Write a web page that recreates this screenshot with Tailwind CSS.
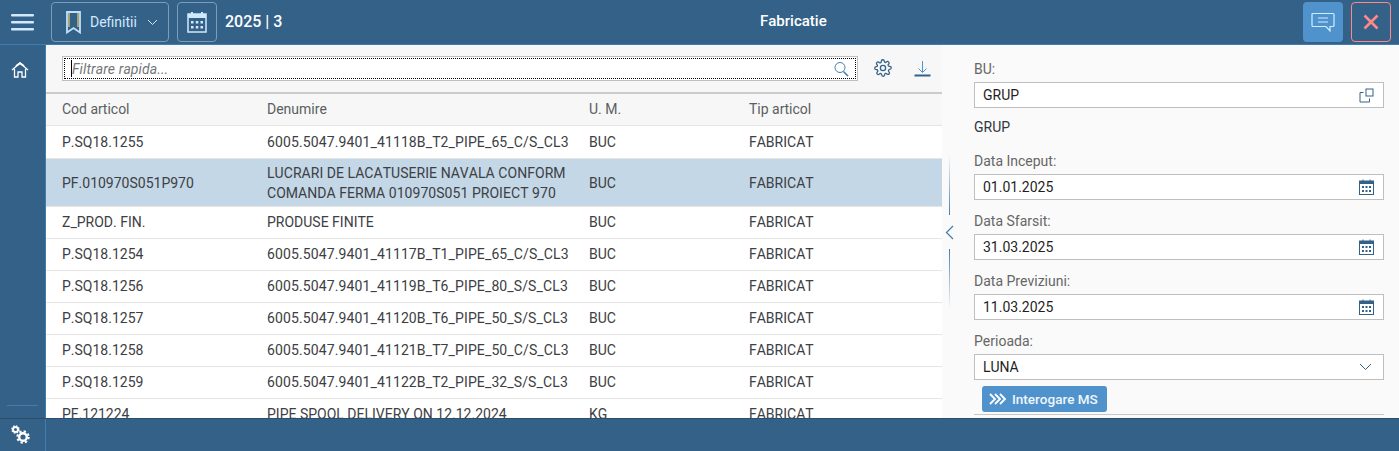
<!DOCTYPE html>
<html><head><meta charset="utf-8">
<script src="https://cdn.jsdelivr.net/npm/@tailwindcss/browser@4"></script>
</head>
<body class="m-0">
<div class="w-[1399px] h-[451px] overflow-hidden flex flex-col bg-white font-['Roboto',sans-serif] [font-kerning:none] text-[14px] text-[#3c4044]">
  <!-- header -->
  <header class="relative h-[45px] shrink-0 bg-[#346187] border-b border-[#427cac] flex items-center text-white">
    <button class="w-[45px] h-[44px] flex items-center justify-center">
      <svg width="23" height="18" viewBox="0 0 23 18"><g fill="#d1e8ff"><rect x="0" y="1" width="23" height="2.500" rx="1"/><rect x="0" y="8" width="23" height="2.500" rx="1"/><rect x="0" y="15" width="23" height="2.500" rx="1"/></g></svg>
    </button>
    <button class="ml-[6px] w-[118px] h-[40px] rounded-[4px] border border-[#7c9cb8] flex items-center pl-[14px]">
      <svg width="15" height="23" viewBox="0 0 15 23" fill="none"><path d="M1 1h13v20.500l-6.500-4.500-6.500 4.500z" fill="#346187" stroke="#bfe0fb" stroke-width="1.800"/><path d="M3 2v14M12 2v14" stroke="#f0d060" stroke-width="1.200"/></svg>
      <span class="ml-[9px] text-[14px] text-[#d1e8ff]">Definitii</span>
      <svg class="ml-[10px]" width="11" height="7" viewBox="0 0 11 7" fill="none"><path d="M1 1l4.500 4.500L10 1" stroke="#d1e8ff"/></svg>
    </button>
    <button class="ml-[8px] w-[40px] h-[40px] rounded-[4px] border border-[#7c9cb8] flex items-center justify-center">
      <svg width="20" height="22" viewBox="0 0 20 22" fill="none"><rect x="1" y="3" width="18" height="18" stroke="#d1e8ff" stroke-width="1.500"/><rect x="1" y="3" width="18" height="4" fill="#d1e8ff"/><path d="M5 1v3M15 1v3" stroke="#d1e8ff" stroke-width="2"/><g fill="#d1e8ff"><rect x="4" y="10" width="2.500" height="2.500"/><rect x="8.800" y="10" width="2.500" height="2.500"/><rect x="13.500" y="10" width="2.500" height="2.500"/><rect x="4" y="15" width="2.500" height="2.500"/><rect x="8.800" y="15" width="2.500" height="2.500"/><rect x="13.500" y="15" width="2.500" height="2.500"/></g></svg>
    </button>
    <span class="ml-[8px] text-[16px] font-medium">2025 | 3</span>
    <span class="absolute left-[760px] top-[11px] text-[15px] font-medium leading-[20px]">Fabricatie</span>
    <div class="ml-auto flex gap-[8px] pr-[8px]">
      <button class="w-[40px] h-[40px] rounded-[4px] bg-[#5093cc] flex items-center justify-center">
        <svg width="24" height="21" viewBox="0 0 24 21" fill="none"><path d="M2 1.500h20a1 1 0 0 1 1 1v11a1 1 0 0 1-1 1h-3v4.500l-4-4.500H2a1 1 0 0 1-1-1v-11a1 1 0 0 1 1-1z" stroke="#cdeeff" stroke-width="1.200"/><path d="M7 6h10M7 10h10" stroke="#d1e8ff"/></svg>
      </button>
      <button class="w-[40px] h-[40px] rounded-[4px] border border-[#ff8888] flex items-center justify-center">
        <svg width="16" height="16" viewBox="0 0 16 16" fill="none"><path d="M1.500 1.500l13 13M14.500 1.500l-13 13" stroke="#ff8888" stroke-width="2.600"/></svg>
      </button>
    </div>
  </header>

  <div class="flex-1 min-h-0 flex">
    <!-- sidebar -->
    <aside class="w-[46px] shrink-0 bg-[#346187] border-r border-[#427cac] flex flex-col items-center">
      <svg class="mt-[17px] ml-[-6px]" width="18" height="16" viewBox="0 0 18 16" fill="none" stroke="#ffffff" stroke-width="1.300"><path d="M1 8l8-7 8 7"/><path d="M3.500 7v8h3.500v-5h4v5h3.500V7"/><path d="M5 4l4-2.800L13 4" stroke-width="1.800"/></svg>
      <div class="mt-auto w-[31px] h-px bg-[#427cac] mb-[12px] ml-[-1px]"></div>
    </aside>

    <!-- table area -->
    <main class="w-[896px] shrink-0 flex flex-col overflow-hidden">
      <div class="h-[49px] shrink-0 bg-[#f7f7f7] border-b-2 border-[#cccccc] flex items-center pl-[16px]">
        <div class="w-[796px] h-[25px] bg-white border border-[#bfbfbf] flex items-center relative">
          <div class="absolute inset-[1px] border border-dotted border-black"></div>
          <div class="w-px h-[17px] bg-black ml-[8px]"></div>
          <span class="italic text-[#74777a] text-[14px] leading-[20px] tracking-[0.1px]">Filtrare rapida...</span>
          <svg class="absolute right-[8px] top-[4px]" width="15" height="16" viewBox="0 0 15 16" fill="none" stroke="#427cac"><circle cx="6" cy="6.500" r="5"/><path d="M9.500 10.500l4.500 4.500" stroke-width="1.500"/></svg>
        </div>
        <svg class="ml-[16px] mt-[-1px]" width="18" height="18" viewBox="0 0 24 24" fill="none" stroke="#346187" stroke-width="1.700"><circle cx="12" cy="12" r="3.500"/><path d="M19.400 15a1.600 1.600 0 0 0 .3 1.800l.1.100a2 2 0 1 1-2.800 2.800l-.1-.1a1.600 1.600 0 0 0-2.700 1.100V21a2 2 0 1 1-4 0v-.1a1.600 1.600 0 0 0-2.700-1.100l-.1.100a2 2 0 1 1-2.800-2.800l.1-.1a1.600 1.600 0 0 0-1.100-2.700H3a2 2 0 1 1 0-4h.1a1.600 1.600 0 0 0 1.100-2.700l-.1-.1a2 2 0 1 1 2.800-2.800l.1.100a1.600 1.600 0 0 0 2.700-1.100V3a2 2 0 1 1 4 0v.1a1.600 1.600 0 0 0 2.700 1.100l.1-.1a2 2 0 1 1 2.800 2.800l-.1.100a1.600 1.600 0 0 0 1.100 2.700H21a2 2 0 1 1 0 4h-.1a1.600 1.600 0 0 0-1.500 1.300z"/></svg>
        <svg class="ml-[22px] mt-[-1px]" width="17" height="17" viewBox="0 0 17 17" fill="none"><path d="M8.500 1v11M4.500 8.500l4 4 4-4" stroke="#5093cc"/><path d="M0.500 15.500h16" stroke="#346187" stroke-width="2"/></svg>
      </div>
      <div class="grid grid-cols-[205px_322px_160px_1fr] h-[32px] shrink-0 items-center pl-[16px] bg-[#f7f7f7] border-b border-[#e5e5e5] text-[#5a5e62]">
        <span>Cod articol</span><span>Denumire</span><span>U. M.</span><span>Tip articol</span>
      </div>
      <div class="grid grid-cols-[205px_322px_160px_1fr] h-[33px] shrink-0 items-center pl-[16px] border-b border-[#e5e5e5]">
        <span>P.SQ18.1255</span><span class="tracking-[0.12px]">6005.5047.9401_41118B_T2_PIPE_65_C/S_CL3</span><span>BUC</span><span>FABRICAT</span>
      </div>
      <div class="grid grid-cols-[205px_322px_160px_1fr] h-[48px] shrink-0 items-center pl-[16px] bg-[#c4d7e6] border-b border-[#e5e5e5] leading-[20px]">
        <span>PF.010970S051P970</span><span class="whitespace-nowrap tracking-[0.05px]">LUCRARI DE LACATUSERIE NAVALA CONFORM<br>COMANDA FERMA 010970S051 PROIECT 970</span><span>BUC</span><span>FABRICAT</span>
      </div>
      <div class="grid grid-cols-[205px_322px_160px_1fr] h-[32px] shrink-0 items-center pl-[16px] border-b border-[#e5e5e5]">
        <span>Z_PROD. FIN.</span><span>PRODUSE FINITE</span><span>BUC</span><span>FABRICAT</span>
      </div>
      <div class="grid grid-cols-[205px_322px_160px_1fr] h-[32px] shrink-0 items-center pl-[16px] border-b border-[#e5e5e5]">
        <span>P.SQ18.1254</span><span class="tracking-[0.12px]">6005.5047.9401_41117B_T1_PIPE_65_C/S_CL3</span><span>BUC</span><span>FABRICAT</span>
      </div>
      <div class="grid grid-cols-[205px_322px_160px_1fr] h-[32px] shrink-0 items-center pl-[16px] border-b border-[#e5e5e5]">
        <span>P.SQ18.1256</span><span class="tracking-[0.12px]">6005.5047.9401_41119B_T6_PIPE_80_S/S_CL3</span><span>BUC</span><span>FABRICAT</span>
      </div>
      <div class="grid grid-cols-[205px_322px_160px_1fr] h-[32px] shrink-0 items-center pl-[16px] border-b border-[#e5e5e5]">
        <span>P.SQ18.1257</span><span class="tracking-[0.12px]">6005.5047.9401_41120B_T6_PIPE_50_S/S_CL3</span><span>BUC</span><span>FABRICAT</span>
      </div>
      <div class="grid grid-cols-[205px_322px_160px_1fr] h-[32px] shrink-0 items-center pl-[16px] border-b border-[#e5e5e5]">
        <span>P.SQ18.1258</span><span class="tracking-[0.12px]">6005.5047.9401_41121B_T7_PIPE_50_C/S_CL3</span><span>BUC</span><span>FABRICAT</span>
      </div>
      <div class="grid grid-cols-[205px_322px_160px_1fr] h-[32px] shrink-0 items-center pl-[16px] border-b border-[#e5e5e5]">
        <span>P.SQ18.1259</span><span class="tracking-[0.12px]">6005.5047.9401_41122B_T2_PIPE_32_S/S_CL3</span><span>BUC</span><span>FABRICAT</span>
      </div>
      <div class="grid grid-cols-[205px_322px_160px_1fr] h-[32px] shrink-0 items-center pl-[16px] border-b border-[#e5e5e5]">
        <span>PF.121224</span><span>PIPE SPOOL DELIVERY ON 12.12.2024</span><span>KG</span><span>FABRICAT</span>
      </div>
    </main>

    <!-- right panel -->
    <section class="relative flex-1 bg-[#fafafa] pl-[32px] pr-[15px] overflow-hidden">
      <div class="absolute left-[7px] top-[110px] h-[60px] w-px bg-linear-to-b from-transparent to-[#427cac]"></div>
      <div class="absolute left-[7px] top-[204px] h-[60px] w-px bg-linear-to-b from-[#427cac] to-transparent"></div>
      <svg class="absolute left-[3px] top-[180px]" width="9" height="15" viewBox="0 0 9 15" fill="none"><path d="M8 1L1.500 7.500 8 14" stroke="#427cac" stroke-width="1.200"/></svg>

      <div class="text-[#666666] leading-[18px] pt-[15px]">BU:</div>
      <div class="mt-[4px] h-[26px] bg-white border border-[#bfbfbf] flex items-center pl-[8px] pr-[9px] justify-between text-[#1f1f1f]">
        <span>GRUP</span>
        <svg width="15" height="15" viewBox="0 0 15 15" fill="none" stroke="#346187"><path d="M4.500 4.500H1v9.500h9.500V10.500"/><rect x="7" y="1" width="7" height="7" stroke="#346187"/></svg>
      </div>
      <div class="mt-[10px] leading-[18px] text-[#32363a]">GRUP</div>

      <div class="mt-[16px] text-[#666666] leading-[18px]">Data Inceput:</div>
      <div class="mt-[4px] h-[26px] bg-white border border-[#bfbfbf] flex items-center pl-[8px] pr-[9px] justify-between text-[#1f1f1f]">
        <span>01.01.2025</span>
        <svg width="15" height="16" viewBox="0 0 15 16" fill="none"><rect x="0.500" y="2" width="14" height="13.500" stroke="#346187"/><rect x="0.500" y="2" width="14" height="3" fill="#346187"/><path d="M4 0.500v2M11 0.500v2" stroke="#346187"/><g fill="#346187"><rect x="3" y="7" width="2" height="2"/><rect x="6.500" y="7" width="2" height="2"/><rect x="10" y="7" width="2" height="2"/><rect x="3" y="11" width="2" height="2"/><rect x="6.500" y="11" width="2" height="2"/><rect x="10" y="11" width="2" height="2"/></g></svg>
      </div>

      <div class="mt-[12px] text-[#666666] leading-[18px]">Data Sfarsit:</div>
      <div class="mt-[4px] h-[26px] bg-white border border-[#bfbfbf] flex items-center pl-[8px] pr-[9px] justify-between text-[#1f1f1f]">
        <span>31.03.2025</span>
        <svg width="15" height="16" viewBox="0 0 15 16" fill="none"><rect x="0.500" y="2" width="14" height="13.500" stroke="#346187"/><rect x="0.500" y="2" width="14" height="3" fill="#346187"/><path d="M4 0.500v2M11 0.500v2" stroke="#346187"/><g fill="#346187"><rect x="3" y="7" width="2" height="2"/><rect x="6.500" y="7" width="2" height="2"/><rect x="10" y="7" width="2" height="2"/><rect x="3" y="11" width="2" height="2"/><rect x="6.500" y="11" width="2" height="2"/><rect x="10" y="11" width="2" height="2"/></g></svg>
      </div>

      <div class="mt-[12px] text-[#666666] leading-[18px]">Data Previziuni:</div>
      <div class="mt-[4px] h-[26px] bg-white border border-[#bfbfbf] flex items-center pl-[8px] pr-[9px] justify-between text-[#1f1f1f]">
        <span>11.03.2025</span>
        <svg width="15" height="16" viewBox="0 0 15 16" fill="none"><rect x="0.500" y="2" width="14" height="13.500" stroke="#346187"/><rect x="0.500" y="2" width="14" height="3" fill="#346187"/><path d="M4 0.500v2M11 0.500v2" stroke="#346187"/><g fill="#346187"><rect x="3" y="7" width="2" height="2"/><rect x="6.500" y="7" width="2" height="2"/><rect x="10" y="7" width="2" height="2"/><rect x="3" y="11" width="2" height="2"/><rect x="6.500" y="11" width="2" height="2"/><rect x="10" y="11" width="2" height="2"/></g></svg>
      </div>

      <div class="mt-[12px] text-[#666666] leading-[18px]">Perioada:</div>
      <div class="mt-[4px] h-[26px] bg-white border border-[#bfbfbf] flex items-center pl-[8px] pr-[11px] justify-between text-[#1f1f1f]">
        <span>LUNA</span>
        <svg width="13" height="8" viewBox="0 0 13 8" fill="none"><path d="M1 1l5.500 5.500L12 1" stroke="#346187"/></svg>
      </div>
      <button class="mt-[6px] ml-[8px] h-[26px] w-[125px] rounded-[3px] bg-[#5093cc] flex items-center pl-[7px] text-white font-medium">
        <svg width="18" height="12" viewBox="0 0 18 12" fill="none" stroke="#ffffff" stroke-width="1.800"><path d="M1 1l5 5-5 5M6 1l5 5-5 5M11 1l5 5-5 5"/></svg>
        <span class="ml-[5px] text-[#f0f6fb] text-[13.500px]">Interogare MS</span>
      </button>
      <div class="mt-[2px] h-px bg-[#c8c8c8]"></div>
    </section>
  </div>

  <!-- footer -->
  <footer class="h-[33px] shrink-0 bg-[#346187] border-t border-[#2b4d6b] flex items-center">
    <div class="w-[46px] h-full border-r border-[#427cac] flex items-center pl-[11px]">
      <svg width="20" height="20" viewBox="0 0 20 20" fill="none"><circle cx="4.500" cy="4.500" r="2.500" stroke="#ffffff" stroke-width="2"/><circle cx="4.500" cy="4.500" r="3.700" stroke="#ffffff" stroke-width="1.200" stroke-dasharray="1.500 1.400"/><circle cx="12" cy="12" r="3.800" stroke="#ffffff" stroke-width="2.400"/><circle cx="12" cy="12" r="5.700" stroke="#ffffff" stroke-width="2" stroke-dasharray="2.300 2.170"/></svg>
    </div>
  </footer>
</div>
</body></html>
